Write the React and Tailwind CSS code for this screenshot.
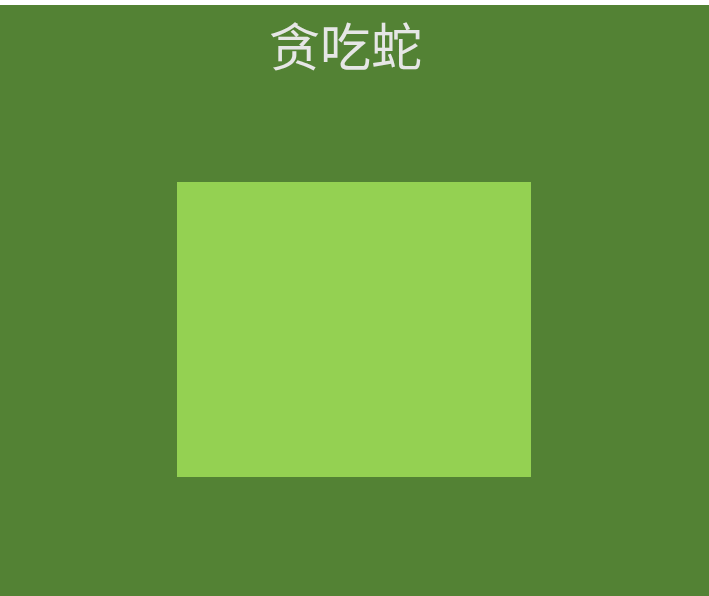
export default function App() {
  return (
    <div className="w-full h-[596px] bg-white pt-[5px]">
      <div
        className="h-[591px] bg-[#538234] flex flex-col items-center pr-[1px]"
        style={{ fontFamily: '"Noto Sans CJK SC", "Noto Sans", sans-serif' }}
      >
        <h1 className="mt-[14px] mr-[17px] text-[51px] leading-[51px] font-normal text-[#e6e6e6]">
          贪吃蛇
        </h1>
        <div className="mt-[112px] w-[354px] h-[295px] bg-[#94d152]" />
      </div>
    </div>
  );
}
